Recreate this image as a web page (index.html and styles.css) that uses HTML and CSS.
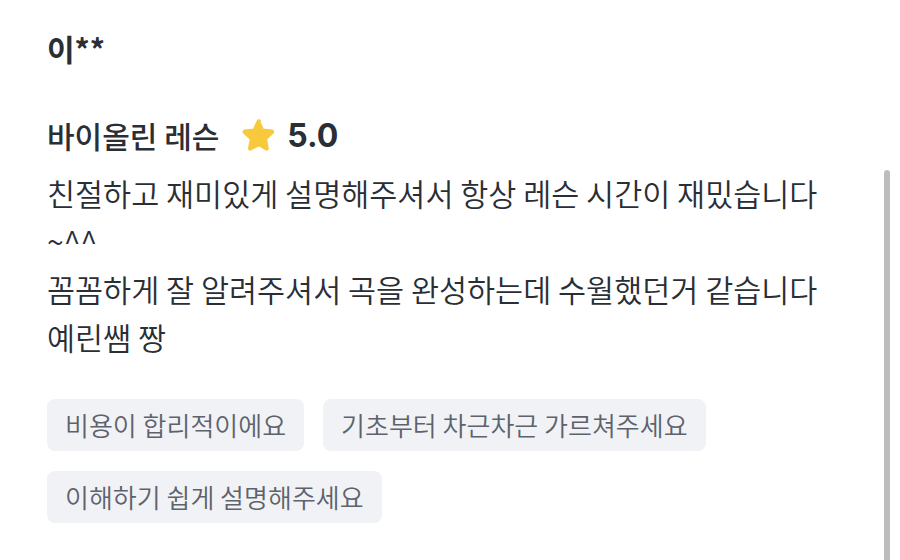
FILE: index.html
```html
<!DOCTYPE html>
<html>
<head>
    <title>후기</title>
    <link rel="stylesheet" href="styles.css">
</head>
<body>
    <div class="review">
        <div class="reviewer">이**</div>

        <div class="review-title">
            <span class="lesson">바이올린 레슨</span>
            <span class="rating">
                <svg class="star" viewBox="0 0 24 24" width="36" height="36">
                    <path d="M12 2.6l2.7 5.6 6.1.8c.7.1 1 1 .5 1.5l-4.5 4.2 1.1 6.1c.1.7-.6 1.3-1.3.9L12 18.8l-5.4 2.9c-.7.4-1.5-.2-1.3-.9l1.1-6.1-4.5-4.2c-.5-.5-.2-1.4.5-1.5l6.1-.8L11.1 2.6c.3-.7 1.3-.7 1.6 0z" fill="#f8c93c" stroke="#f8c93c" stroke-width="1.2" stroke-linejoin="round"/>
                </svg>
                <span class="score">5.0</span>
            </span>
        </div>

        <p class="review-body">친절하고 재미있게 설명해주셔서 항상 레슨 시간이 재밌습니다 ~^^<br>꼼꼼하게 잘 알려주셔서 곡을 완성하는데 수월했던거 같습니다<br>예린쌤 짱</p>

        <div class="tags">
            <span class="tag">비용이 합리적이에요</span>
            <span class="tag">기초부터 차근차근 가르쳐주세요</span>
            <span class="tag">이해하기 쉽게 설명해주세요</span>
        </div>
    </div>

    <div class="scrollbar"></div>
</body>
</html>
```

FILE: styles.css
```css
body {
    margin: 0;
    background: #fff;
    color: #2a2e35;
    font-family: "Noto Sans CJK KR", "Noto Sans", sans-serif;
    overflow: hidden;
}
.review {
    padding: 28px 47px 0;
    width: 800px;
}
.reviewer {
    font-size: 30px;
    font-weight: bold;
    line-height: 40px;
}
.review-title {
    display: flex;
    align-items: center;
    margin-top: 47px;
    height: 40px;
    font-size: 30px;
    font-weight: 500;
}
.rating {
    display: flex;
    align-items: center;
    margin-left: 22px;
}
.star {
    margin-right: 10px;
}
.score {
    font-family: "Inter", "Liberation Sans", sans-serif;
    font-weight: bold;
    font-size: 32px;
}
.review-body {
    margin: 14px 0 0;
    font-size: 30.5px;
    font-weight: 350;
    line-height: 48px;
    word-break: keep-all;
}
.tags {
    display: flex;
    flex-wrap: wrap;
    gap: 20px 19px;
    margin-top: 38px;
}
.tag {
    background: #f1f2f5;
    color: #5d626d;
    font-size: 26px;
    font-weight: 350;
    line-height: 52px;
    padding: 0 18px;
    border-radius: 8px;
}
.scrollbar {
    position: absolute;
    right: 10px;
    top: 170px;
    width: 6px;
    height: 400px;
    background: #bdbdbd;
    border-radius: 3px;
}
```
